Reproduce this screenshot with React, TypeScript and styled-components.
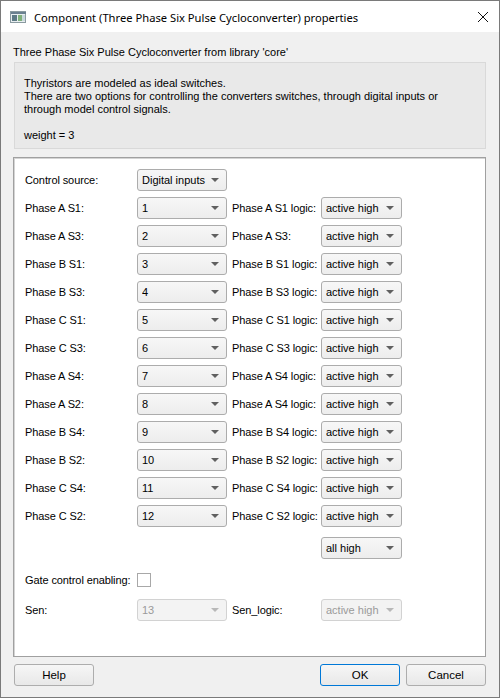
import styled, { createGlobalStyle } from 'styled-components';

const GlobalStyle = createGlobalStyle`
  html, body {
    margin: 0;
    padding: 0;
    background: #ffffff;
  }
  * {
    box-sizing: border-box;
  }
`;

export const Window = styled.div`
  width: 500px;
  height: 698px;
  border: 1px solid #7a7a7a;
  display: flex;
  flex-direction: column;
  background: #f0f0f0;
  font-family: "Liberation Sans", Arial, sans-serif;
  font-size: 11px;
  color: #000;
  overflow: hidden;
`;
export const TitleBar = styled.div`
  height: 31px;
  background: #ffffff;
  display: flex;
  align-items: center;
  padding: 0 10px 0 9px;
  gap: 8px;
  flex-shrink: 0;
`;
export const TitleText = styled.div`
  flex: 1;
  font-family: "Noto Sans", "Open Sans", sans-serif;
  font-size: 11.2px;
  color: #000;
  padding-top: 1px;
`;
export const Body = styled.div`
  flex: 1;
  display: flex;
  flex-direction: column;
  padding: 14px 13px 11px 12px;
`;
export const LibraryLine = styled.div`
  line-height: 13px;
`;
export const InfoBox = styled.div`
  margin: 3px 0 8px 1px;
  padding: 14px 10px 6px 9px;
  background: #e9e9e9;
  border: 1px solid #d9d9d9;
  line-height: 13px;
`;
export const Panel = styled.div`
  flex: 1;
  background: #ffffff;
  border: 1px solid #a0a0a0;
  box-shadow: inset 1px 1px 0 #d4d4d4;
  padding: 11px 11px;
  display: flex;
  flex-direction: column;
  gap: 6px;
`;
export const Row = styled.div<{ $gap?: number }>`
  display: grid;
  grid-template-columns: 112px 90px 5px 89px 81px;
  height: 22px;
  align-items: center;
  margin-top: ${(p) => p.$gap ?? 0}px;
`;
export const Label = styled.span<{ $col?: number }>`
  grid-column: ${(p) => p.$col ?? 1};
  white-space: nowrap;
  letter-spacing: -0.1px;
`;
export const Combo = styled.div<{ $col?: number; $disabled?: boolean }>`
  grid-column: ${(p) => p.$col ?? 2};
  height: 22px;
  border: 1px solid ${(p) => (p.$disabled ? '#d2d2d2' : '#acacac')};
  border-radius: 3px;
  background: ${(p) => (p.$disabled ? '#f3f3f3' : 'linear-gradient(#f7f7f7, #ededed)')};
  color: ${(p) => (p.$disabled ? '#9a9a9a' : '#000')};
  display: flex;
  align-items: center;
  gap: 4px;
  padding: 0 7px 0 4px;
  font-size: 11px;
`;
export const ComboText = styled.span`
  flex: 1;
  white-space: nowrap;
  overflow: hidden;
`;
export const Arrow = styled.span<{ $disabled?: boolean }>`
  flex-shrink: 0;
  width: 0;
  height: 0;
  border-left: 4px solid transparent;
  border-right: 4px solid transparent;
  border-top: 4px solid ${(p) => (p.$disabled ? '#b8b8b8' : '#606060')};
`;
export const CheckBox = styled.span`
  grid-column: 2;
  width: 14px;
  height: 14px;
  border: 1px solid #a8a8a8;
  background: #ffffff;
`;
export const ButtonRow = styled.div`
  display: flex;
  gap: 6px;
  margin-top: 7px;
  padding-left: 1px;
`;
export const Button = styled.button<{ $primary?: boolean }>`
  width: 80px;
  height: 22px;
  border: 1px solid ${(p) => (p.$primary ? '#0078d7' : '#adadad')};
  border-radius: 3px;
  background: linear-gradient(#f6f6f6, #e8e8e8);
  font-family: "Liberation Sans", Arial, sans-serif;
  font-size: 11.5px;
  color: #000;
  padding: 0;
`;
export const Spacer = styled.div`
  flex: 1;
`;

function Select({ value, col, disabled }: { value: string; col?: number; disabled?: boolean }) {
  return (
    <Combo $col={col} $disabled={disabled}>
      <ComboText>{value}</ComboText>
      <Arrow $disabled={disabled} />
    </Combo>
  );
}

const rows: [string, string, string][] = [
  ['Phase A S1:', '1', 'Phase A S1 logic:'],
  ['Phase A S3:', '2', 'Phase A S3:'],
  ['Phase B S1:', '3', 'Phase B S1 logic:'],
  ['Phase B S3:', '4', 'Phase B S3 logic:'],
  ['Phase C S1:', '5', 'Phase C S1 logic:'],
  ['Phase C S3:', '6', 'Phase C S3 logic:'],
  ['Phase A S4:', '7', 'Phase A S4 logic:'],
  ['Phase A S2:', '8', 'Phase A S4 logic:'],
  ['Phase B S4:', '9', 'Phase B S4 logic:'],
  ['Phase B S2:', '10', 'Phase B S2 logic:'],
  ['Phase C S4:', '11', 'Phase C S4 logic:'],
  ['Phase C S2:', '12', 'Phase C S2 logic:'],
];

export default function App(): JSX.Element {
  return (
    <>
      <GlobalStyle />
      <Window>
        <TitleBar>
          <svg width="16" height="12" viewBox="0 0 16 12">
            <rect x="0.5" y="0.5" width="15" height="11" fill="#e8eef0" stroke="#8a9aa0" />
            <rect x="1" y="1" width="15" height="2" fill="#6a8090" />
            <rect x="2" y="4" width="5" height="6" fill="#5e7a86" />
            <rect x="8" y="4" width="4" height="6" fill="#7fb07a" />
            <rect x="12" y="4" width="3" height="6" fill="#c8d8dc" />
          </svg>
          <TitleText>Component (Three Phase Six Pulse Cycloconverter) properties</TitleText>
          <svg width="12" height="12" viewBox="0 0 12 12">
            <path d="M1 1 L11 11 M11 1 L1 11" stroke="#111" strokeWidth="1" />
          </svg>
        </TitleBar>
        <Body>
          <LibraryLine>Three Phase Six Pulse Cycloconverter from library 'core'</LibraryLine>
          <InfoBox>
            Thyristors are modeled as ideal switches.
            <br />
            There are two options for controlling the converters switches, through digital inputs or
            <br />
            through model control signals.
            <br />
            <br />
            weight = 3
          </InfoBox>
          <Panel>
            <Row>
              <Label>Control source:</Label>
              <Select value="Digital inputs" />
            </Row>
            {rows.map(([label, value, logic], i) => (
              <Row key={i}>
                <Label>{label}</Label>
                <Select value={value} />
                <Label $col={4}>{logic}</Label>
                <Select value="active high" col={5} />
              </Row>
            ))}
            <Row $gap={4}>
              <Select value="all high" col={5} />
            </Row>
            <Row $gap={4}>
              <Label>Gate control enabling:</Label>
              <CheckBox />
            </Row>
            <Row $gap={2}>
              <Label>Sen:</Label>
              <Select value="13" disabled />
              <Label $col={4}>Sen_logic:</Label>
              <Select value="active high" col={5} disabled />
            </Row>
          </Panel>
          <ButtonRow>
            <Button>Help</Button>
            <Spacer />
            <Button $primary>OK</Button>
            <Button>Cancel</Button>
          </ButtonRow>
        </Body>
      </Window>
    </>
  );
}
